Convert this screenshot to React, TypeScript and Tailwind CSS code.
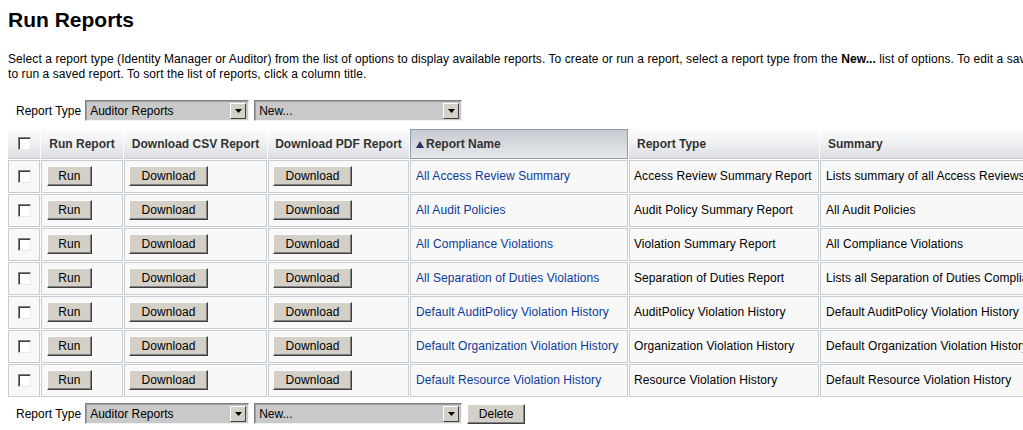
import React from 'react';

const rows = [
  ['All Access Review Summary', 'Access Review Summary Report', 'Lists summary of all Access Reviews'],
  ['All Audit Policies', 'Audit Policy Summary Report', 'All Audit Policies'],
  ['All Compliance Violations', 'Violation Summary Report', 'All Compliance Violations'],
  ['All Separation of Duties Violations', 'Separation of Duties Report', 'Lists all Separation of Duties Compliance Violations'],
  ['Default AuditPolicy Violation History', 'AuditPolicy Violation History', 'Default AuditPolicy Violation History'],
  ['Default Organization Violation History', 'Organization Violation History', 'Default Organization Violation History'],
  ['Default Resource Violation History', 'Resource Violation History', 'Default Resource Violation History'],
];

// classic raised grey button
function Btn({ label, w }: { label: string; w: string }) {
  return (
    <button
      className={`${w} h-[20px] bg-[#d4d0c8] border border-t-white border-l-white border-b-[#404040] border-r-[#404040] shadow-[inset_-1px_-1px_0_#808080] text-[12px] leading-none text-black`}
    >
      {label}
    </button>
  );
}

function Check() {
  return (
    <span className="inline-block w-[13px] h-[13px] bg-white border border-t-[#808080] border-l-[#808080] border-b-[#e8e8e8] border-r-[#e8e8e8] shadow-[inset_1px_1px_0_#404040]" />
  );
}

function Select({ value, w }: { value: string; w: string }) {
  return (
    <div
      className={`${w} h-[21px] flex items-center justify-between bg-[#c9c9c9] border border-t-[#808080] border-l-[#808080] border-b-[#f0f0f0] border-r-[#f0f0f0] shadow-[inset_1px_1px_0_#a0a0a0] pl-[4px] pr-[2px]`}
    >
      <span className="text-[12px] text-black">{value}</span>
      <span className="w-[16px] h-[16px] flex items-center justify-center bg-[#d4d0c8] border border-t-white border-l-white border-b-[#404040] border-r-[#404040]">
        <svg width="7" height="4" viewBox="0 0 7 4">
          <path d="M0 0h7L3.5 4z" fill="#000" />
        </svg>
      </span>
    </div>
  );
}

const th = 'h-[30px] border-b border-[#c8ccd0] bg-gradient-to-b from-[#fcfcfd] via-[#eff0f2] to-[#dadde1] text-[12px] font-bold text-[#333]';
const td = 'h-[33px] border border-[#c6ced4] bg-[#f8f8f8] text-[12px] text-black tracking-[0.08px] pb-[1px]';

export default function App() {
  return (
    <div className="w-[1023px] h-[430px] overflow-hidden bg-white font-['Liberation_Sans',Arial,sans-serif] text-black">
      <h1 className="pl-[8px] pt-[8px] text-[21px] leading-[24px] font-bold">Run Reports</h1>

      <div className="mt-[20px] pl-[8px] text-[12px] leading-[15px] whitespace-nowrap tracking-[0.08px]">
        <div>
          Select a report type (Identity Manager or Auditor) from the list of options to display available reports. To create or run a report, select a report type from the <b>New...</b> list of options. To edit a saved report, click the report name. Click Run
        </div>
        <div>to run a saved report. To sort the list of reports, click a column title.</div>
      </div>

      <div className="mt-[18px] pl-[16px] flex items-center gap-[5px]">
        <span className="text-[12px] -mr-[1px]">Report Type</span>
        <Select value="Auditor Reports" w="w-[164px]" />
        <Select value="New..." w="w-[208px]" />
      </div>

      <table className="mt-[7px] ml-[7px] table-fixed border-separate border-spacing-[1px] w-[1114px]">
        <colgroup>
          <col className="w-[32px]" />
          <col className="w-[82px]" />
          <col className="w-[143px]" />
          <col className="w-[141px]" />
          <col className="w-[218px]" />
          <col className="w-[190px]" />
          <col className="w-[300px]" />
        </colgroup>
        <thead>
          <tr>
            <th className={th}>
              <div className="flex justify-center">
                <Check />
              </div>
            </th>
            <th className={th}>Run Report</th>
            <th className={th}>Download CSV Report</th>
            <th className={th}>Download PDF Report</th>
            <th className="h-[30px] border border-[#8c9ca6] bg-gradient-to-b from-[#c8cbd1] to-[#e6e8eb] text-[12px] font-bold text-[#333] text-left pl-[5px]">
              <span className="inline-flex items-center gap-[2px]">
                <svg width="8" height="7" viewBox="0 0 8 7">
                  <path d="M4 0L8 7H0z" fill="#2e2e6a" />
                </svg>
                Report Name
              </span>
            </th>
            <th className={`${th} text-left pl-[8px]`}>Report Type</th>
            <th className={`${th} text-left pl-[8px]`}>Summary</th>
          </tr>
        </thead>
        <tbody>
          {rows.map(([name, type, summary]) => (
            <tr key={name}>
              <td className={td}>
                <div className="flex justify-center">
                  <Check />
                </div>
              </td>
              <td className={`${td} pl-[5px]`}>
                <Btn label="Run" w="w-[45px]" />
              </td>
              <td className={`${td} pl-[4px]`}>
                <Btn label="Download" w="w-[79px]" />
              </td>
              <td className={`${td} pl-[4px]`}>
                <Btn label="Download" w="w-[79px]" />
              </td>
              <td className={`${td} pl-[5px] whitespace-nowrap`}>
                <a className="text-[#0b3a9c]">{name}</a>
              </td>
              <td className={`${td} pl-[4px] whitespace-nowrap`}>{type}</td>
              <td className={`${td} pl-[5px] whitespace-nowrap overflow-hidden`}>{summary}</td>
            </tr>
          ))}
        </tbody>
      </table>

      <div className="mt-[5px] pl-[16px] flex items-center gap-[5px]">
        <span className="text-[12px] -mr-[1px]">Report Type</span>
        <Select value="Auditor Reports" w="w-[164px]" />
        <Select value="New..." w="w-[208px]" />
        <Btn label="Delete" w="w-[58px]" />
      </div>
    </div>
  );
}
